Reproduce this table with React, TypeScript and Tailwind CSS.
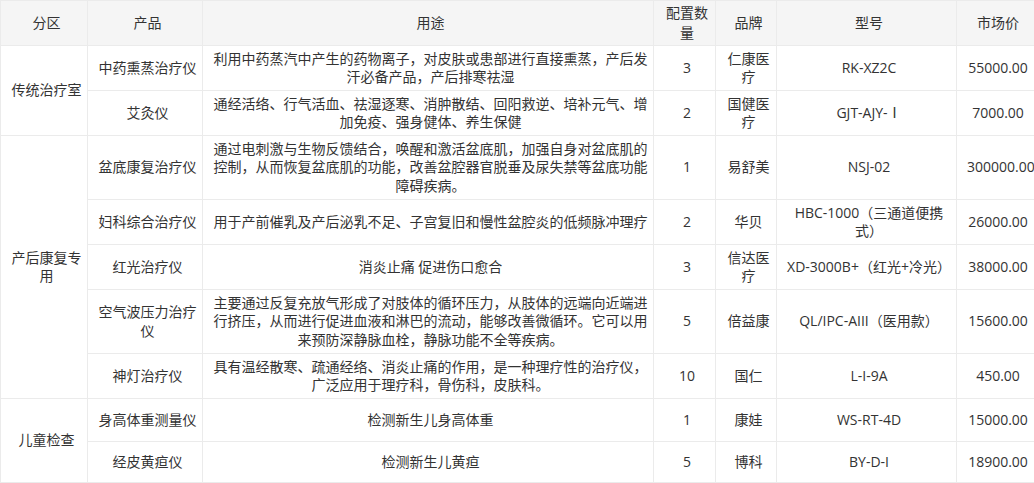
import React from "react";

type Row = {
  zone?: { name: React.ReactNode; span: number };
  product: React.ReactNode;
  desc: React.ReactNode;
  qty: string;
  brand: React.ReactNode;
  model: React.ReactNode;
  price: string;
  h: string;
};

const rows: Row[] = [
  {
    zone: { name: "传统治疗室", span: 2 },
    product: "中药熏蒸治疗仪",
    desc: (
      <>
        利用中药蒸汽中产生的药物离子，对皮肤或患部进行直接熏蒸，产后发
        <br />
        汗必备产品，产后排寒祛湿
      </>
    ),
    qty: "3",
    brand: (
      <>
        仁康医
        <br />疗
      </>
    ),
    model: "RK-XZ2C",
    price: "55000.00",
    h: "h-[45px]",
  },
  {
    product: "艾灸仪",
    desc: (
      <>
        通经活络、行气活血、祛湿逐寒、消肿散结、回阳救逆、培补元气、增
        <br />
        加免疫、强身健体、养生保健
      </>
    ),
    qty: "2",
    brand: (
      <>
        国健医
        <br />疗
      </>
    ),
    model: "GJT-AJY-Ⅰ",
    price: "7000.00",
    h: "h-[45px]",
  },
  {
    zone: {
      name: (
        <>
          产后康复专
          <br />用
        </>
      ),
      span: 5,
    },
    product: "盆底康复治疗仪",
    desc: (
      <>
        通过电刺激与生物反馈结合，唤醒和激活盆底肌，加强自身对盆底肌的
        <br />
        控制，从而恢复盆底肌的功能，改善盆腔器官脱垂及尿失禁等盆底功能
        <br />
        障碍疾病。
      </>
    ),
    qty: "1",
    brand: "易舒美",
    model: "NSJ-02",
    price: "300000.00",
    h: "h-[64px]",
  },
  {
    product: "妇科综合治疗仪",
    desc: "用于产前催乳及产后泌乳不足、子宫复旧和慢性盆腔炎的低频脉冲理疗",
    qty: "2",
    brand: "华贝",
    model: (
      <>
        HBC-1000（三通道便携
        <br />
        式）
      </>
    ),
    price: "26000.00",
    h: "h-[45px]",
  },
  {
    product: "红光治疗仪",
    desc: "消炎止痛 促进伤口愈合",
    qty: "3",
    brand: (
      <>
        信达医
        <br />疗
      </>
    ),
    model: "XD-3000B+（红光+冷光）",
    price: "38000.00",
    h: "h-[45px]",
  },
  {
    product: (
      <>
        空气波压力治疗
        <br />仪
      </>
    ),
    desc: (
      <>
        主要通过反复充放气形成了对肢体的循环压力，从肢体的远端向近端进
        <br />
        行挤压，从而进行促进血液和淋巴的流动，能够改善微循环。它可以用
        <br />
        来预防深静脉血栓，静脉功能不全等疾病。
      </>
    ),
    qty: "5",
    brand: "倍益康",
    model: "QL/IPC-AIII（医用款）",
    price: "15600.00",
    h: "h-[64px]",
  },
  {
    product: "神灯治疗仪",
    desc: (
      <>
        具有温经散寒、疏通经络、消炎止痛的作用，是一种理疗性的治疗仪，
        <br />
        广泛应用于理疗科，骨伤科，皮肤科。
      </>
    ),
    qty: "10",
    brand: "国仁",
    model: "L-I-9A",
    price: "450.00",
    h: "h-[45px]",
  },
  {
    zone: { name: "儿童检查", span: 2 },
    product: "身高体重测量仪",
    desc: "检测新生儿身高体重",
    qty: "1",
    brand: "康娃",
    model: "WS-RT-4D",
    price: "15000.00",
    h: "h-[43px]",
  },
  {
    product: "经皮黄疸仪",
    desc: "检测新生儿黄疸",
    qty: "5",
    brand: "博科",
    model: "BY-D-I",
    price: "18900.00",
    h: "h-[41px]",
  },
];

const cell =
  "border border-[#ebebeb] pl-[10px] pr-[5px] py-0 text-center align-middle whitespace-nowrap font-normal";

export default function App() {
  return (
    <div className="h-screen w-full overflow-hidden bg-white font-['Open_Sans','Noto_Sans_CJK_SC',sans-serif] text-[14px] text-[#333333]">
      <table className="w-[1034px] table-fixed border-collapse">
        <colgroup>
          <col className="w-[87px]" />
          <col className="w-[115px]" />
          <col className="w-[451px]" />
          <col className="w-[62px]" />
          <col className="w-[61px]" />
          <col className="w-[180px]" />
          <col className="w-[78px]" />
        </colgroup>
        <thead>
          <tr className="h-[45px] bg-[#f5f5f5] leading-[20px]">
            <th className={cell}>分区</th>
            <th className={cell}>产品</th>
            <th className={cell}>用途</th>
            <th className={cell}>
              配置数
              <br />量
            </th>
            <th className={cell}>品牌</th>
            <th className={cell}>型号</th>
            <th className={cell}>市场价</th>
          </tr>
        </thead>
        <tbody className="leading-[18.5px]">
          {rows.map((r, i) => (
            <tr key={i} className={r.h}>
              {r.zone && (
                <td className={cell} rowSpan={r.zone.span}>
                  {r.zone.name}
                </td>
              )}
              <td className={cell}>{r.product}</td>
              <td className={cell}>{r.desc}</td>
              <td className={cell}>{r.qty}</td>
              <td className={cell}>{r.brand}</td>
              <td className={cell}>{r.model}</td>
              <td className={cell}>{r.price}</td>
            </tr>
          ))}
        </tbody>
      </table>
    </div>
  );
}
